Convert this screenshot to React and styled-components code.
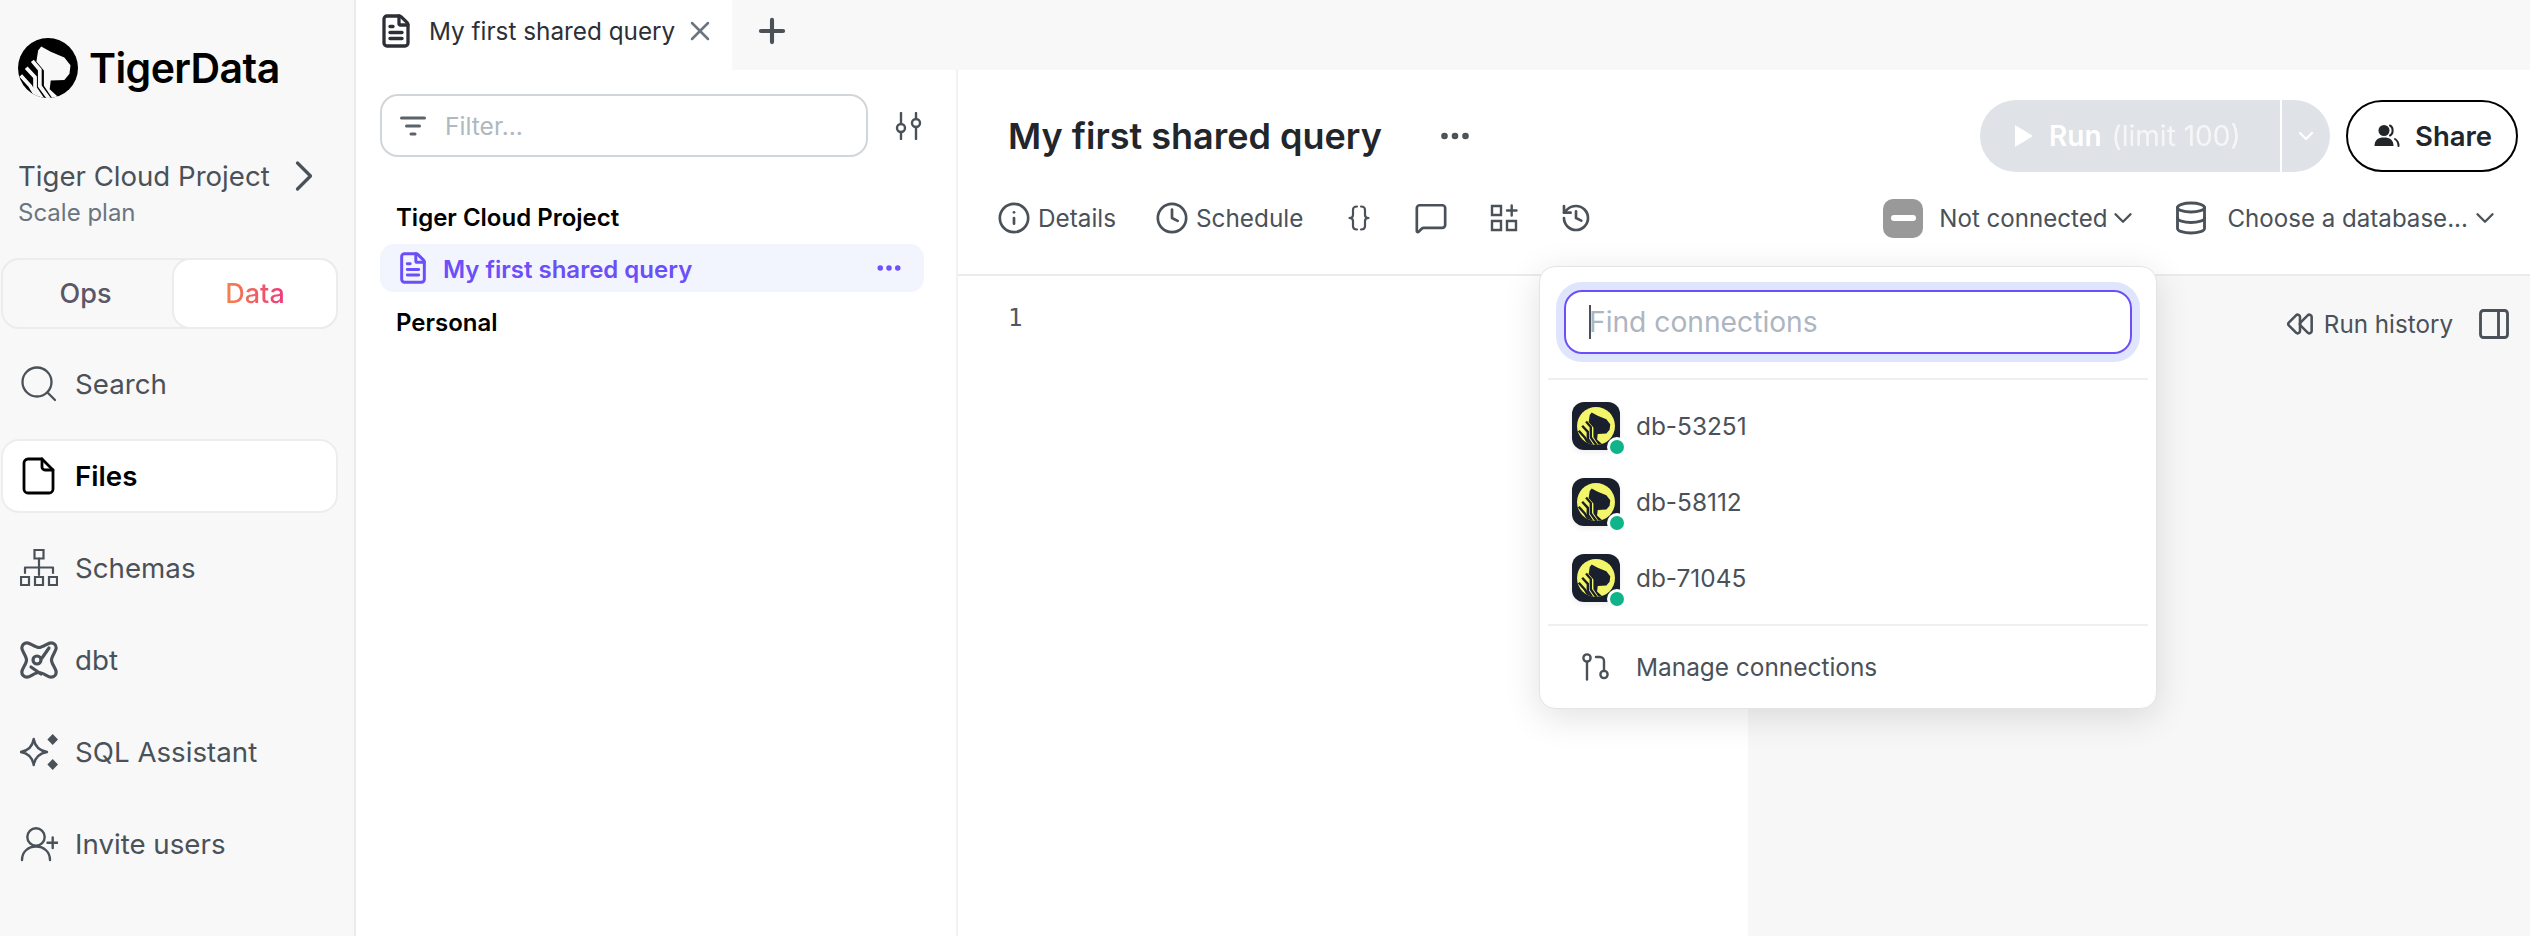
import React from "react";
import styled, { createGlobalStyle } from "styled-components";
import { ChevronRight, ChevronDown, X, Plus, FileText, Ellipsis, Info, Clock, MessageSquare, History, Database, Rewind, PanelRight } from "lucide-react";

const Global = createGlobalStyle`
  html, body { margin: 0; padding: 0; background: #fff; }
  #root { width: 2530px; height: 936px; overflow: hidden; }
  * { box-sizing: border-box; }
`;

const Page = styled.div`
  position: relative;
  display: flex;
  width: 2530px;
  height: 936px;
  overflow: hidden;
  font-family: Inter, "Noto Sans", sans-serif;
  color: #4a5159;
  background: #fff;
`;

/* Sidebar */
const Sidebar = styled.aside`
  width: 356px;
  flex: none;
  display: flex;
  flex-direction: column;
  background: #f8f8f8;
  border-right: 2px solid #e9ecef;
  padding: 38px 16px 0 1px;
`;
const Brand = styled.div`
  display: flex;
  align-items: center;
  gap: 11px;
  height: 60px;
  padding-left: 17px;
`;
const BrandName = styled.span`
  font-size: 41px;
  font-weight: 600;
  letter-spacing: -0.6px;
  color: #000;
`;
const Project = styled.div`
  margin-top: 61px;
  padding-left: 17px;
`;
const ProjectRow = styled.div`
  display: flex;
  align-items: center;
  height: 34px;
  gap: 8px;
  font-size: 27.6px;
  color: #4a5159;
  svg { flex: none; }
`;
const Plan = styled.div`
  margin-top: 5px;
  line-height: 30px;
  font-size: 24px;
  color: #6b7580;
`;
const Segment = styled.div`
  margin-top: 30px;
  height: 71px;
  display: grid;
  grid-template-columns: 171px 1fr;
  border: 2px solid #ececec;
  border-radius: 18px;
`;
const SegmentItem = styled.div`
  display: flex;
  align-items: center;
  justify-content: center;
  font-size: 27px;
  font-weight: 500;
  color: #5b5668;
  border-radius: 16px;
  ${(p) => (p.$active ? "background:#fff; box-shadow:0 0 0 2px #ececec;" : "padding-right:6px;")}
`;
const GradientText = styled.span`
  background: linear-gradient(90deg, #f2854a, #ec3a7c);
  -webkit-background-clip: text;
  background-clip: text;
  color: transparent;
`;
const Nav = styled.nav`
  margin-top: 18px;
  display: flex;
  flex-direction: column;
  gap: 18px;
`;
const NavItem = styled.div`
  height: 74px;
  display: flex;
  align-items: center;
  gap: 17px;
  padding-left: 17px;
  font-size: 27.7px;
  border-radius: 18px;
  border: 2px solid ${(p) => (p.$active ? "#ebeef1" : "transparent")};
  background: ${(p) => (p.$active ? "#fff" : "transparent")};
  color: ${(p) => (p.$active ? "#000" : "#4a5159")};
  font-weight: ${(p) => (p.$active ? 600 : 400)};
`;

/* Main */
const Main = styled.div`
  flex: 1;
  min-width: 0;
  display: flex;
  flex-direction: column;
`;
const TabBar = styled.div`
  height: 70px;
  flex: none;
  display: flex;
  align-items: center;
  background: #f8f8f8;
`;
const Tab = styled.div`
  width: 376px;
  height: 100%;
  flex: none;
  display: flex;
  align-items: center;
  padding: 0 0 8px 22px;
  background: #fff;
  font-size: 24.3px;
  color: #2c3036;
`;
const TabLabel = styled.span`
  margin-left: 15px;
  white-space: nowrap;
`;
const TabClose = styled.span`
  display: flex;
  margin-left: 9px;
  color: #6b7580;
`;
const AddTab = styled.span`
  display: flex;
  margin: 0 0 8px 21px;
  color: #4a5159;
`;
const Content = styled.div`
  flex: 1;
  min-height: 0;
  display: flex;
`;

/* File panel */
const FilePanel = styled.section`
  width: 602px;
  flex: none;
  border-right: 2px solid #f1f2f4;
  padding: 24px 32px 0 24px;
`;
const FilterRow = styled.div`
  display: flex;
  align-items: center;
  gap: 27px;
`;
const FilterBox = styled.div`
  width: 488px;
  height: 63px;
  display: flex;
  align-items: center;
  gap: 19px;
  padding-left: 18px;
  border: 2px solid #d1d6db;
  border-radius: 18px;
  font-size: 24.6px;
  color: #b0b8c1;
`;
const FilterGlyph = styled.span`
  display: flex;
  color: #5a626b;
`;
const TreeHead = styled.div`
  height: 48px;
  display: flex;
  align-items: center;
  padding-left: 16px;
  font-size: 24px;
  font-weight: 600;
  color: #000;
  margin-top: ${(p) => p.$mt || 0}px;
`;
const TreeRow = styled.div`
  height: 48px;
  margin-top: 3px;
  display: flex;
  align-items: center;
  padding: 0 20px 0 16px;
  gap: 13px;
  background: #f3f5fe;
  border-radius: 14px;
  color: #6b4ff8;
  font-size: 24px;
  font-weight: 600;
`;
const TreeLabel = styled.span`
  flex: 1;
  padding-top: 2px;
`;

/* Editor */
const Work = styled.section`
  flex: 1;
  min-width: 0;
  display: flex;
  flex-direction: column;
`;
const WorkHead = styled.header`
  height: 206px;
  flex: none;
  border-bottom: 2px solid #e9ecef;
  padding: 30px 12px 0 0;
`;
const TitleRow = styled.div`
  display: flex;
  align-items: center;
  height: 72px;
`;
const Title = styled.h1`
  margin: 0 0 0 50px;
  font-size: 36px;
  font-weight: 600;
  color: #22262b;
  white-space: nowrap;
`;
const TitleMore = styled.span`
  display: flex;
  margin-left: 55px;
  color: #4a5159;
`;
const Spacer = styled.div`
  flex: 1;
`;
const RunGroup = styled.div`
  display: flex;
  height: 72px;
  width: 350px;
  border-radius: 36px;
  overflow: hidden;
  color: #fff;
  font-size: 28px;
`;
const RunMain = styled.div`
  width: 300px;
  display: flex;
  align-items: center;
  background: #dfe2e6;
  padding-left: 34px;
`;
const RunLabel = styled.span`
  font-weight: 600;
  margin: 0 10px 0 15px;
`;
const RunLimit = styled.span`
  opacity: 0.72;
`;
const RunCaret = styled.div`
  flex: 1;
  margin-left: 2px;
  display: flex;
  align-items: center;
  justify-content: center;
  background: #dfe2e6;
`;
const ShareButton = styled.div`
  width: 172px;
  height: 72px;
  margin-left: 16px;
  display: flex;
  align-items: center;
  gap: 15px;
  padding-left: 26px;
  border: 2px solid #000;
  border-radius: 36px;
  font-size: 27.5px;
  font-weight: 600;
  color: #22262b;
`;
const ToolRow = styled.div`
  display: flex;
  align-items: center;
  height: 40px;
  margin-top: 26px;
  padding: 0 18px 0 39px;
  gap: 39px;
  font-size: 24.3px;
  color: #4a5159;
`;
const ToolItem = styled.div`
  display: flex;
  align-items: center;
  gap: 7px;
  white-space: nowrap;
  margin-left: ${(p) => p.$ml || 0}px;
`;
const ToolSpacer = styled.div`
  flex: 1;
`;
const Select = styled.div`
  display: flex;
  align-items: center;
  white-space: nowrap;
  margin-left: ${(p) => p.$ml || 0}px;
  font-size: 24.1px;
`;
const SelectLabel = styled.span`
  margin: 0 ${(p) => p.$right || 0}px 0 ${(p) => p.$left}px;
`;
const Status = styled.span`
  width: 40px;
  height: 39px;
  border-radius: 10px;
  background: #999;
  display: flex;
  align-items: center;
  justify-content: center;
  &::after {
    content: "";
    width: 25px;
    height: 6px;
    border-radius: 3px;
    background: #fff;
  }
`;
const Body = styled.div`
  flex: 1;
  min-height: 0;
  display: flex;
`;
const EditorPane = styled.div`
  width: 790px;
  flex: none;
  padding: 25px 0 0 50px;
  font-family: "DejaVu Sans Mono", monospace;
  font-size: 24px;
  line-height: 34px;
  color: #4f5862;
`;
const HistoryPane = styled.div`
  flex: 1;
  background: #f7f7f7;
  display: flex;
  align-items: flex-start;
  justify-content: flex-end;
  gap: 23px;
  padding: 30px 18px 0 0;
  font-size: 24.2px;
  color: #4a5159;
`;
const HistoryLink = styled.div`
  display: flex;
  align-items: center;
  height: 36px;
  gap: 10px;
`;

/* Popover */
const Popover = styled.div`
  position: absolute;
  left: 1539px;
  top: 266px;
  width: 618px;
  height: 443px;
  background: #fff;
  border: 1px solid #e3e4e6;
  border-radius: 16px;
  box-shadow: 0 8px 36px rgba(0, 0, 0, 0.12);
  display: flex;
  flex-direction: column;
  padding: 23px 8px 0;
`;
const SearchBox = styled.div`
  height: 64px;
  margin: 0 16px;
  display: flex;
  align-items: center;
  padding-left: 23px;
  border: 2px solid #6b4ff8;
  border-radius: 18px;
  box-shadow: 0 0 0 8px #dfe5fc;
  font-size: 28.2px;
  color: #adb5bf;
`;
const Caret = styled.span`
  width: 2px;
  height: 34px;
  background: #4a5159;
  margin-right: -2px;
`;
const Rule = styled.div`
  height: 2px;
  flex: none;
  background: #edf0f3;
  margin-top: ${(p) => p.$mt}px;
`;
const ConnList = styled.div`
  margin-top: 8px;
`;
const ConnRow = styled.div`
  height: 76px;
  display: flex;
  align-items: center;
  gap: 16px;
  padding-left: 24px;
  font-size: 24.4px;
  color: #4a5159;
`;
const DbIcon = styled.span`
  position: relative;
  width: 48px;
  height: 48px;
  flex: none;
  border-radius: 12px;
  background: #1a1f2e;
  display: flex;
  align-items: center;
  justify-content: center;
  box-shadow: 0 2px 6px rgba(0, 0, 0, 0.08);
`;
const Online = styled.span`
  position: absolute;
  right: -4px;
  bottom: -4px;
  width: 14px;
  height: 14px;
  border-radius: 50%;
  background: #10b48a;
  box-shadow: 0 0 0 3px #fff;
`;
const Manage = styled.div`
  flex: 1;
  display: flex;
  align-items: center;
  gap: 26px;
  padding: 0 0 0 34px;
  font-size: 24.4px;
  color: #4a5159;
`;

/* Drawings */
const Mark = ({ size, bg, fg, id }) => (
  <svg width={size} height={size} viewBox="54 55 176 176" style={{ flex: "none" }}>
    <defs>
      <clipPath id={id}>
        <circle cx="142" cy="143" r="88" />
      </clipPath>
    </defs>
    <circle cx="142" cy="143" r="88" fill={bg} />
    <g clipPath={`url(#${id})`}>
      <path
        d="M113 92 L122 80 L150 95 L190 112 L208 135 L205 160 L190 178 L150 180 L147 205 L176 232 L160 240 L130 195 L130 150 L108 124 Z"
        fill={fg}
      />
      <g fill="none" stroke={fg} strokeWidth="11">
        <path d="M96 122 L118 148 L118 196 L150 240" />
        <path d="M78 142 L104 170 L104 202 L130 240" />
        <path d="M62 165 L90 196 L116 240" />
      </g>
    </g>
  </svg>
);

const Draw = ({ s = 38, vb = 38, w = 2.3, children, color = "currentColor" }) => (
  <svg width={s} height={s} viewBox={`0 0 ${vb} ${vb}`} fill="none" stroke={color} strokeWidth={w} strokeLinecap="round" strokeLinejoin="round" style={{ flex: "none" }}>
    {children}
  </svg>
);

const SearchIcon = () => (
  <Draw>
    <circle cx="17" cy="17" r="14.5" />
    <path d="M27.5 27.5 L35 35" />
  </Draw>
);
const FileIcon = () => (
  <Draw w={2.8}>
    <path d="M8 2 H22 L33 13 V32 a4 4 0 0 1-4 4 H8 a4 4 0 0 1-4-4 V6 a4 4 0 0 1 4-4Z" />
    <path d="M22 2 V10 a3 3 0 0 0 3 3 H33" />
  </Draw>
);
const SchemaIcon = () => (
  <Draw w={2.2}>
    <path d="M14.5 0.8 H23.5 V9.5 H14.5Z" strokeLinejoin="miter" />
    <path d="M19 9.5 V26 M5 24 V18.5 H33 V24" />
    <path d="M1 28 H9 V36 H1Z M15 28 H23 V36 H15Z M29 28 H37 V36 H29Z" strokeLinejoin="miter" />
  </Draw>
);
const DbtIcon = () => (
  <Draw w={3.2}>
    <path d="M7 1.8 C10 1.8 15 6.5 19 6.5 C23 6.5 28 1.8 31 1.8 C34 1.8 36.2 4 36.2 7 C36.2 10 31.5 15 31.5 19 C31.5 23 36.2 28 36.2 31 C36.2 34 34 36.2 31 36.2 C28 36.2 23 31.5 19 31.5 C15 31.5 10 36.2 7 36.2 C4 36.2 1.8 34 1.8 31 C1.8 28 6.5 23 6.5 19 C6.5 15 1.8 10 1.8 7 C1.8 4 4 1.8 7 1.8Z" />
    <circle cx="17" cy="19" r="4" />
    <path d="M29 7 L22 17 M11 26 L21 33" />
  </Draw>
);
const SparkIcon = () => (
  <Draw w={2.4}>
    <path d="M13.7 6 Q15.5 17 27 19 Q15.5 21 13.7 32 Q12 21 0.8 19 Q12 17 13.7 6Z" />
    <path d="M32.7 1 L38 6.5 L32.7 12 L27.4 6.5Z M32.7 26 L38 31.5 L32.7 37 L27.4 31.5Z" fill="currentColor" stroke="none" />
  </Draw>
);
const InviteIcon = () => (
  <Draw w={2.4}>
    <circle cx="16" cy="12" r="8.7" />
    <path d="M2 35 C2 27 8 21.5 16 21.5 C24 21.5 30 27 30 35" />
    <path d="M27.5 17.7 H38 M32.7 12.5 V23" />
  </Draw>
);
const FilterIcon = () => (
  <Draw s={26} vb={26} w={3}>
    <path d="M1.5 5 H24.5 M6.5 13 H19.5 M11 21 H15" />
  </Draw>
);
const SlidersIcon = () => (
  <Draw s={28} vb={28} w={2.4}>
    <path d="M6 1 V12 M6 20 V27 M21 1 V7 M21 15 V27" />
    <circle cx="6" cy="16" r="4" />
    <circle cx="21" cy="11" r="4" />
  </Draw>
);
const BracesIcon = () => (
  <Draw s={30} vb={30} w={2.2}>
    <path d="M13 3.5 C10 3.5 9 4.5 9 7 V12 C9 14 8 15 5.5 15 C8 15 9 16 9 18 V23 C9 25.5 10 26.5 13 26.5" />
    <path d="M17 3.5 C20 3.5 21 4.5 21 7 V12 C21 14 22 15 24.5 15 C22 15 21 16 21 18 V23 C21 25.5 20 26.5 17 26.5" />
  </Draw>
);
const GridPlusIcon = () => (
  <Draw s={34} vb={34} w={2.4}>
    <path d="M5 5 H14 V14 H5Z M5 20 H14 V29 H5Z M20 20 H29 V29 H20Z" strokeLinejoin="miter" />
    <path d="M20 9.5 H29.5 M24.7 4.5 V14.5" />
  </Draw>
);
const UsersIcon = () => (
  <svg width="26" height="24" viewBox="0 0 26 24" style={{ flex: "none" }}>
    <circle cx="10" cy="6.5" r="5.5" fill="#22262b" />
    <path d="M0.5 22 C0.5 16 4 13.5 10 13.5 C16 13.5 19.5 16 19.5 22 Z" fill="#22262b" />
    <path d="M16 1.5 C19.5 3 19.5 10 16 11.5 M21 15 C23.5 16.5 24.5 19 24.5 22" fill="none" stroke="#22262b" strokeWidth="2" strokeLinecap="round" />
  </svg>
);
const ManageIcon = () => (
  <Draw s={28} vb={28} w={2.4}>
    <circle cx="5" cy="5" r="3.6" />
    <path d="M5 8.6 V26.5" />
    <circle cx="22" cy="21.5" r="3.6" />
    <path d="M22 18 V8 a4 4 0 0 0-4-4 H14" />
  </Draw>
);
const PlayIcon = () => (
  <svg width="20" height="24" viewBox="0 0 20 24" style={{ flex: "none" }}>
    <path d="M1 1 L19 12 L1 23 Z" fill="#fff" />
  </svg>
);

const navItems = [
  { label: "Search", Icon: SearchIcon },
  { label: "Files", Icon: FileIcon, active: true },
  { label: "Schemas", Icon: SchemaIcon },
  { label: "dbt", Icon: DbtIcon },
  { label: "SQL Assistant", Icon: SparkIcon },
  { label: "Invite users", Icon: InviteIcon },
];
const connections = ["db-53251", "db-58112", "db-71045"];

export default function App() {
  return (
    <Page>
      <Global />
      <Sidebar>
        <Brand>
          <Mark size={60} bg="#000" fg="#f8f8f8" id="brandmark" />
          <BrandName>TigerData</BrandName>
        </Brand>
        <Project>
          <ProjectRow>
            Tiger Cloud Project
            <ChevronRight size={52} strokeWidth={1.5} />
          </ProjectRow>
          <Plan>Scale plan</Plan>
        </Project>
        <Segment>
          <SegmentItem>Ops</SegmentItem>
          <SegmentItem $active>
            <GradientText>Data</GradientText>
          </SegmentItem>
        </Segment>
        <Nav>
          {navItems.map(({ label, Icon, active }) => (
            <NavItem key={label} $active={active}>
              <Icon />
              {label}
            </NavItem>
          ))}
        </Nav>
      </Sidebar>
      <Main>
        <TabBar>
          <Tab>
            <FileText size={36} strokeWidth={2.2} color="#2c3036" />
            <TabLabel>My first shared query</TabLabel>
            <TabClose>
              <X size={32} strokeWidth={1.9} />
            </TabClose>
          </Tab>
          <AddTab>
            <Plus size={38} strokeWidth={2.6} />
          </AddTab>
        </TabBar>
        <Content>
          <FilePanel>
            <FilterRow>
              <FilterBox>
                <FilterGlyph>
                  <FilterIcon />
                </FilterGlyph>
                Filter...
              </FilterBox>
              <SlidersIcon />
            </FilterRow>
            <TreeHead $mt={36}>Tiger Cloud Project</TreeHead>
            <TreeRow>
              <FileText size={34} strokeWidth={2.1} />
              <TreeLabel>My first shared query</TreeLabel>
              <Ellipsis size={30} strokeWidth={2.4} />
            </TreeRow>
            <TreeHead $mt={6}>Personal</TreeHead>
          </FilePanel>
          <Work>
            <WorkHead>
              <TitleRow>
                <Title>My first shared query</Title>
                <TitleMore>
                  <Ellipsis size={36} strokeWidth={2.4} />
                </TitleMore>
                <Spacer />
                <RunGroup>
                  <RunMain>
                    <PlayIcon />
                    <RunLabel>Run</RunLabel>
                    <RunLimit>(limit 100)</RunLimit>
                  </RunMain>
                  <RunCaret>
                    <ChevronDown size={24} strokeWidth={2.4} />
                  </RunCaret>
                </RunGroup>
                <ShareButton>
                  <UsersIcon />
                  Share
                </ShareButton>
              </TitleRow>
              <ToolRow>
                <ToolItem>
                  <Info size={34} strokeWidth={1.9} />
                  Details
                </ToolItem>
                <ToolItem>
                  <Clock size={34} strokeWidth={1.9} />
                  Schedule
                </ToolItem>
                <ToolItem $ml={2}>
                  <BracesIcon />
                </ToolItem>
                <ToolItem $ml={1}>
                  <MessageSquare size={34} strokeWidth={1.9} />
                </ToolItem>
                <ToolItem $ml={0}>
                  <GridPlusIcon />
                </ToolItem>
                <ToolItem>
                  <History size={32} strokeWidth={2} />
                </ToolItem>
                <ToolSpacer />
                <Select>
                  <Status />
                  <SelectLabel $left={16} $right={1}>Not connected</SelectLabel>
                  <ChevronDown size={30} strokeWidth={1.9} />
                </Select>
                <Select $ml={-4}>
                  <Database size={36} strokeWidth={1.9} />
                  <SelectLabel $left={18} $right={2}>Choose a database...</SelectLabel>
                  <ChevronDown size={30} strokeWidth={1.9} />
                </Select>
              </ToolRow>
            </WorkHead>
            <Body>
              <EditorPane>1</EditorPane>
              <HistoryPane>
                <HistoryLink>
                  <Rewind size={28} strokeWidth={2.2} />
                  Run history
                </HistoryLink>
                <PanelRight size={36} strokeWidth={1.9} />
              </HistoryPane>
            </Body>
          </Work>
        </Content>
      </Main>
      <Popover>
        <SearchBox>
          <Caret />
          Find connections
        </SearchBox>
        <Rule $mt={24} />
        <ConnList>
          {connections.map((name) => (
            <ConnRow key={name}>
              <DbIcon>
                <Mark size={38} bg="#f3f56a" fg="#1a1f2e" id={`mark-${name}`} />
                <Online />
              </DbIcon>
              {name}
            </ConnRow>
          ))}
        </ConnList>
        <Rule $mt={8} />
        <Manage>
          <ManageIcon />
          Manage connections
        </Manage>
      </Popover>
    </Page>
  );
}
